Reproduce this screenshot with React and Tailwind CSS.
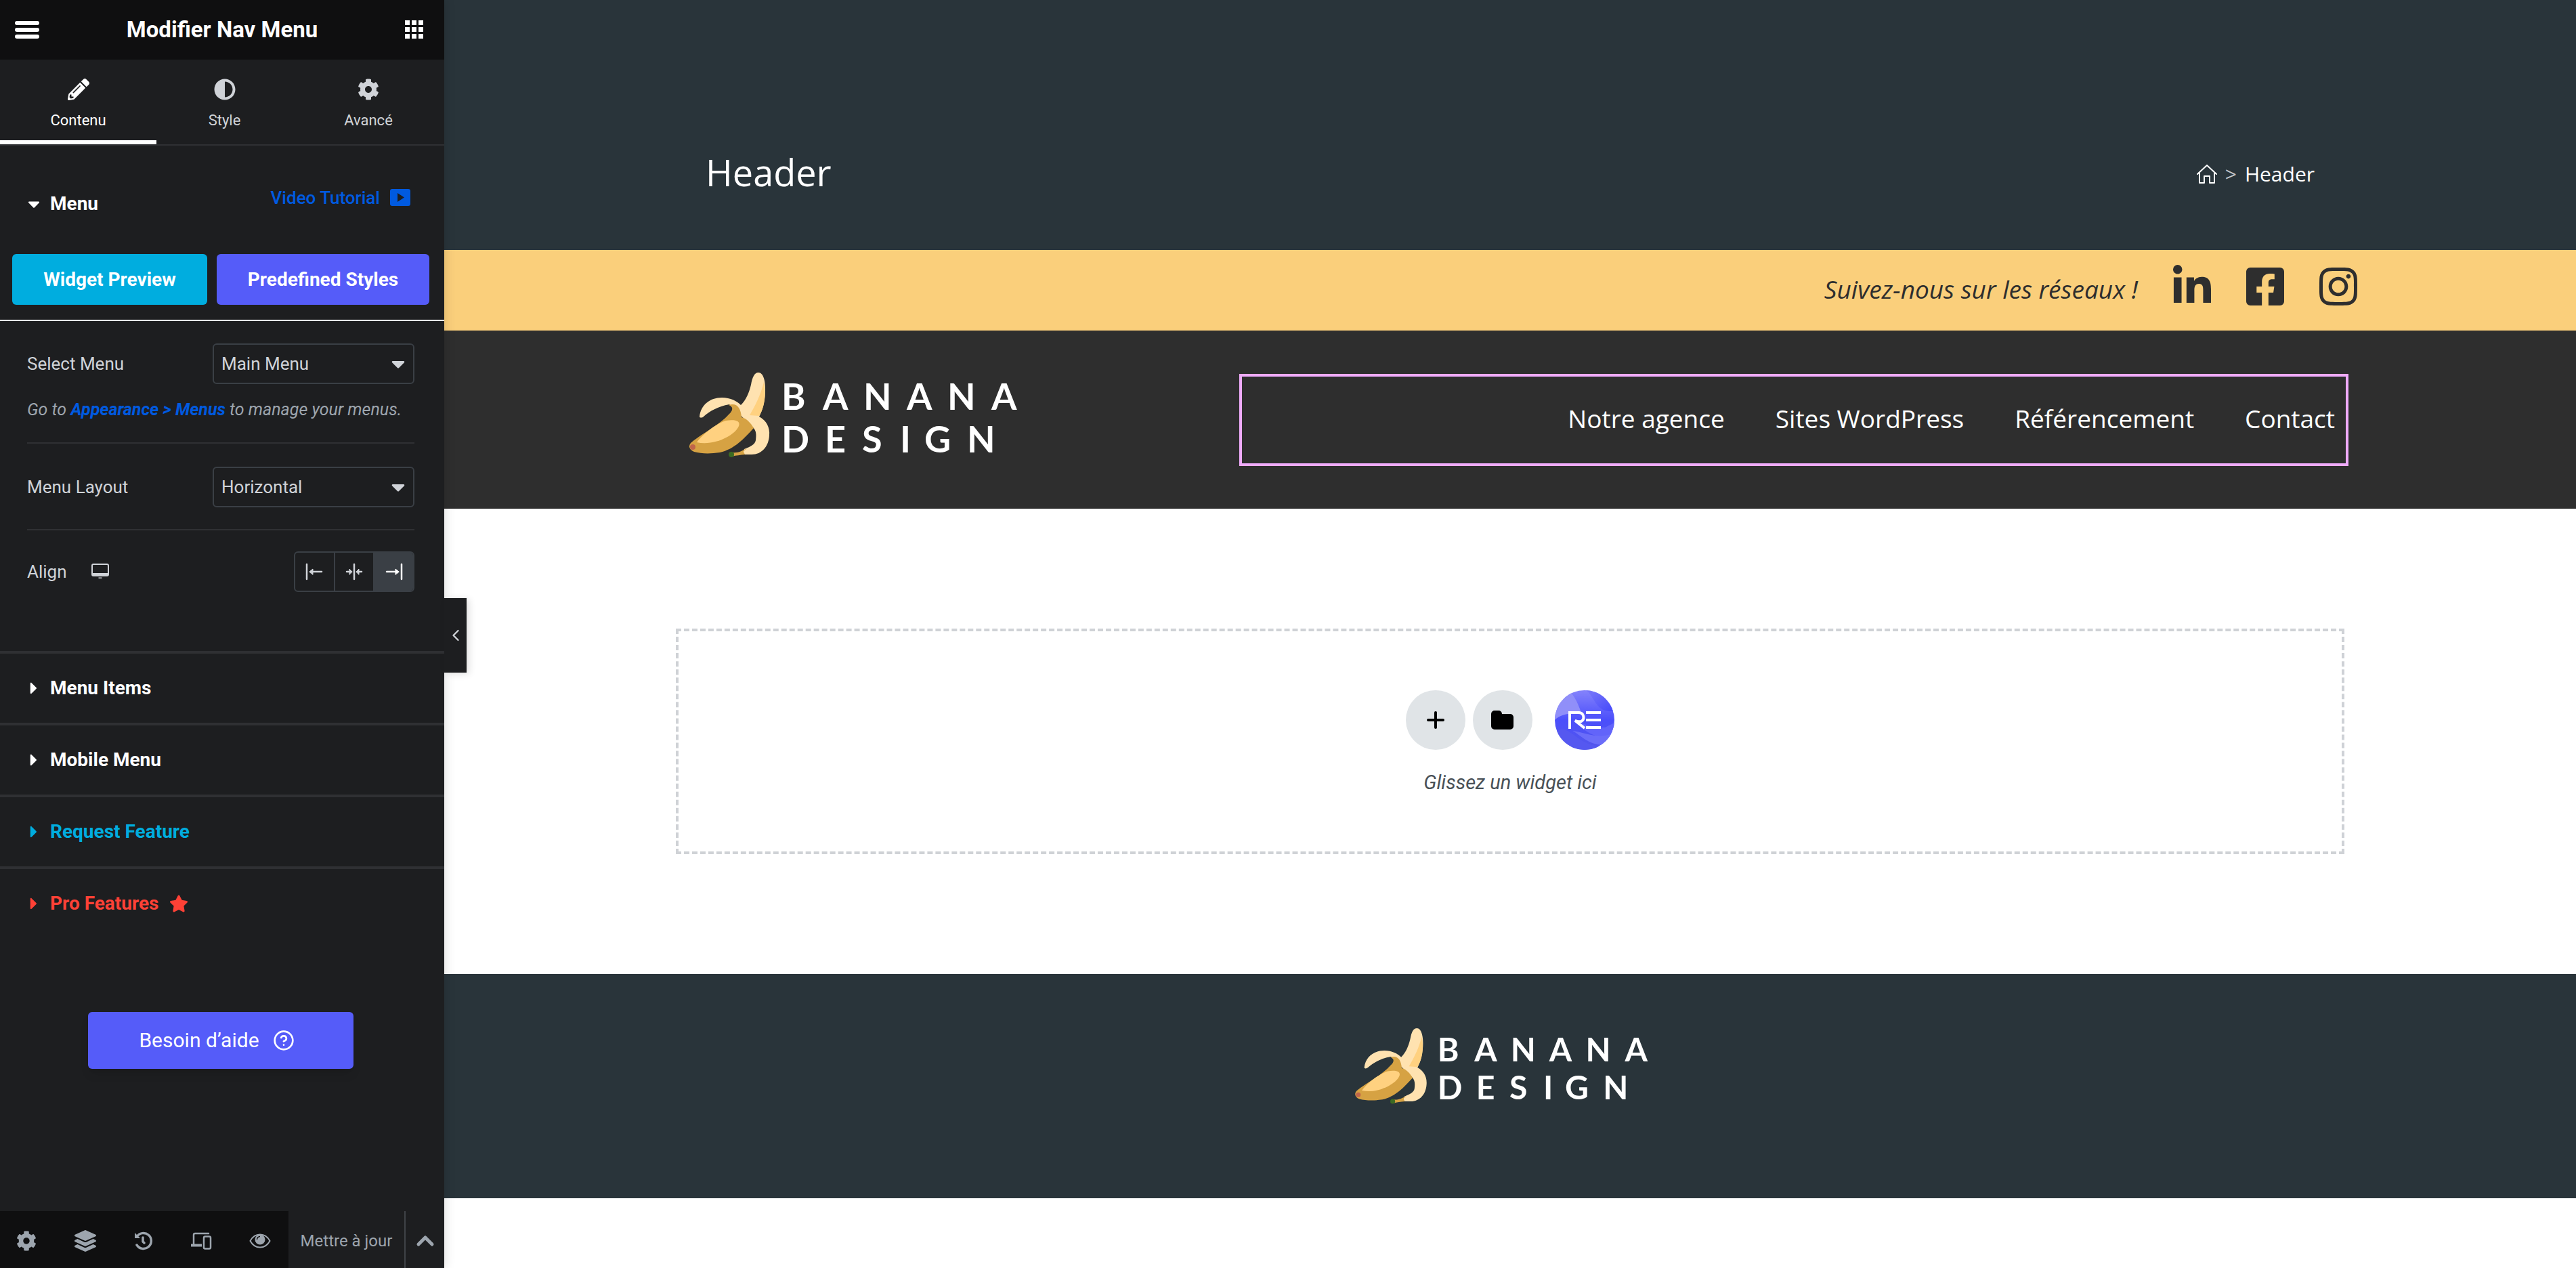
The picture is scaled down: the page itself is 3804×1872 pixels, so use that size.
import {
  FaCog,
  FaLayerGroup,
  FaCaretDown,
  FaCaretRight,
  FaLinkedinIn,
  FaFacebookSquare,
  FaInstagram,
  FaStar,
  FaPencilAlt,
  FaAdjust,
} from 'react-icons/fa';
import { ChevronLeft, ChevronUp, CircleHelp } from 'lucide-react';

const tabs = [
  { label: 'Contenu', Icon: FaPencilAlt, active: true },
  { label: 'Style', Icon: FaAdjust },
  { label: 'Avancé', Icon: FaCog },
];

const sections = [
  { label: 'Menu Items', color: 'text-white' },
  { label: 'Mobile Menu', color: 'text-white' },
  { label: 'Request Feature', color: 'text-[#00addf]' },
  { label: 'Pro Features', color: 'text-[#ff4136]', star: true },
];

const navLinks = ['Notre agence', 'Sites WordPress', 'Référencement', 'Contact'];

const BarsIcon = () => (
  <svg viewBox="0 0 36 26" className="h-[26px] w-9" fill="currentColor" aria-hidden="true">
    {[0, 10, 20].map((y) => <rect key={y} y={y} width="36" height="6" rx="3" />)}
  </svg>
);

const GridIcon = () => (
  <svg viewBox="0 0 28 28" className="size-7" fill="currentColor" aria-hidden="true">
    {[0, 10, 20].map((y) => [0, 10, 20].map((x) => <rect key={`${x}-${y}`} x={x} y={y} width="7" height="7" />))}
  </svg>
);

const VideoIcon = () => (
  <svg viewBox="0 0 30 26" className="h-[26px] w-[30px]" aria-hidden="true">
    <rect width="30" height="25" rx="3" fill="currentColor" />
    <path d="M11 6l10 6.500-10 6.500z" fill="#1d1e20" />
  </svg>
);

const DesktopIcon = () => (
  <svg viewBox="0 0 26 24" className="h-6 w-[26px]" aria-hidden="true">
    <path fillRule="evenodd" d="M3 0h20a3 3 0 0 1 3 3v13a3 3 0 0 1-3 3H3a3 3 0 0 1-3-3V3a3 3 0 0 1 3-3zm0 2a1 1 0 0 0-1 1v11h22V3a1 1 0 0 0-1-1z" fill="currentColor" />
    <path d="M10.500 20.500h5v1.500h-5z" fill="currentColor" />
  </svg>
);

const AlignStart = () => (
  <svg viewBox="0 0 26 26" className="size-[26px]" fill="none" stroke="currentColor" strokeWidth="2.500" strokeLinecap="round" aria-hidden="true">
    <path d="M2 2v22M8 13h16" />
    <path d="M6 13l5-4v8z" fill="currentColor" strokeWidth="1" />
  </svg>
);

const AlignCenter = () => (
  <svg viewBox="0 0 26 26" className="size-[26px]" fill="none" stroke="currentColor" strokeWidth="2.500" strokeLinecap="round" aria-hidden="true">
    <path d="M13 2v22M2 13h5M19 13h5" />
    <path d="M10 13l-4-4v8zM16 13l4-4v8z" fill="currentColor" strokeWidth="1" />
  </svg>
);

const AlignEnd = () => (
  <svg viewBox="0 0 26 26" className="size-[26px]" fill="none" stroke="currentColor" strokeWidth="2.500" strokeLinecap="round" aria-hidden="true">
    <path d="M24 2v22M2 13h16" />
    <path d="M20 13l-5-4v8z" fill="currentColor" strokeWidth="1" />
  </svg>
);

const HistoryIcon = () => (
  <svg viewBox="0 0 28 28" className="size-7" fill="none" stroke="currentColor" strokeWidth="3.500" strokeLinecap="round" aria-hidden="true">
    <path d="M5 8A11.500 11.500 0 1 1 5 20" />
    <path d="M2 2v8h8z" fill="currentColor" stroke="none" />
    <path d="M14 9v6l2 2" />
  </svg>
);

const ResponsiveIcon = () => (
  <svg viewBox="0 0 32 28" className="h-7 w-8" fill="none" stroke="currentColor" strokeWidth="2.500" aria-hidden="true">
    <path d="M5 20V5a2 2 0 0 1 2-2h20" strokeLinecap="round" />
    <path d="M1 20.500h16" strokeWidth="4" />
    <rect x="20" y="7.500" width="10" height="18" rx="2" />
  </svg>
);

const EyeIcon = () => (
  <svg viewBox="0 0 32 24" className="h-6 w-8" aria-hidden="true">
    <path d="M1.500 12C5 5.500 10 2.500 16 2.500S27 5.500 30.500 12C27 18.500 22 21.500 16 21.500S5 18.500 1.500 12z" fill="none" stroke="currentColor" strokeWidth="2" />
    <circle cx="16" cy="10" r="7.500" fill="currentColor" />
    <path d="M11.500 10a4.500 4.500 0 0 1 4.500-4.500" fill="none" stroke="#0f0f10" strokeWidth="1.500" />
  </svg>
);

const HomeIcon = () => (
  <svg viewBox="0 0 30 30" className="size-[30px]" fill="none" stroke="currentColor" strokeWidth="2" strokeLinejoin="round" strokeLinecap="round" aria-hidden="true">
    <path d="M1 15L15 2l14 13" />
    <path d="M4 13v15h7V18h8v10h7V13" />
  </svg>
);

const FolderIcon = () => (
  <svg viewBox="0 0 34 30" className="h-[30px] w-[34px]" aria-hidden="true">
    <path d="M5 1h6a5 5 0 0 1 5 5h12a5 5 0 0 1 5 5v13a5 5 0 0 1-5 5H5a5 5 0 0 1-5-5V6a5 5 0 0 1 5-5z" fill="#000" />
  </svg>
);

const RoyalBadge = () => (
  <svg viewBox="0 0 88 88" className="size-22" aria-hidden="true">
    <defs>
      <clipPath id="badge">
        <circle cx="44" cy="44" r="44" />
      </clipPath>
      <linearGradient id="badgeBase" x1="0" y1="0" x2="0" y2="1">
        <stop offset="0" stopColor="#8583fb" />
        <stop offset=".5" stopColor="#4b4ffb" />
        <stop offset="1" stopColor="#5356ea" />
      </linearGradient>
      <linearGradient id="badgeWave" x1="0" y1="0" x2="1" y2="1">
        <stop offset="0" stopColor="#7b7af9" />
        <stop offset="1" stopColor="#4448fa" />
      </linearGradient>
    </defs>
    <g clipPath="url(#badge)">
      <rect width="88" height="88" fill="url(#badgeBase)" />
      <path d="M0 0h20c10 8 16 24 20 36C26 33 10 34 0 44z" fill="#908ff9" />
      <path d="M46 0c12 8 14 30 34 31h8V0z" fill="url(#badgeWave)" />
      <path d="M30 46c14 4 30 10 44 9l14-7v24c-14 0-40-4-58-26z" fill="#6264fa" />
      <path d="M14 58c14 4 26 24 54 24L60 88H10L0 64c4-5 8-7 14-6z" fill="#5558f0" />
      <path d="M26 60c12 6 22 20 46 21l14-18C66 74 44 62 26 60z" fill="#6b6df9" />
    </g>
    <g fill="none" stroke="#fff" strokeWidth="4">
      <path d="M22 57V33h14a7 7 0 0 1 3 13c-3 1-5 0-9-1l14 11" />
      <path d="M46 33h22M46 44h22M46 55h22" />
    </g>
  </svg>
);

const Logo = ({ className }) => (
  <svg viewBox="0 0 490 140" className={className} role="img" aria-label="Banana Design">
    <path d="M15 65C17 48 30 37 48 37c13 0 22 5 28 11C84 40 88 30 91 18 93 7 96 0 102 0c7 0 11 12 10 30-1 14-4 26-9 35 11 6 16 16 15 28-1 16-11 28-26 28H78l3-8c10-4 16-7 17-13 1-8 1-14-4-19L59 47C42 50 30 57 21 65c-2 2-6 2-6 0z" fill="#ffe2b0" />
    <path d="M110 14c4 19 1 37-7 50l-14-1c9-16 16-29 21-49z" fill="#ffd180" />
    <path d="M58 48c12-4 18 4 19 18 8 2 14 9 18 16-14 15-28 31-50 36-14 2-27 2-38-1-7-3-9-8-5-13 12-11 42-26 56-42 7-6 7-12 0-14z" fill="#d6a243" />
    <path d="M11 103C20 90 42 74 54 71c13-2 22 0 19 8-5 13-36 30-62 24z" fill="#ffd180" />
    <path d="M85 112c-9 4-12 7-22 6v6c6-2 12-2 19-3l-2-4c0-2 3-3 5-5z" fill="#d6a243" />
    <circle cx="5" cy="110" r="4" fill="#c0654a" />
    <circle cx="62" cy="121" r="4" fill="#3c6b22" />
    <g fill="#fff" fontFamily="Lato, sans-serif" fontSize="54" fontWeight="700">
      <text x="136 197 257 321 381 446" y="55">BANANA</text>
      <text x="136 200 255 311 347 410" y="118">DESIGN</text>
    </g>
  </svg>
);

const Select = ({ id, label, value }) => (
  <div className="flex items-center justify-between">
    <label htmlFor={id}>{label}</label>
    <div className="relative w-[298px]">
      <select id={id} className="h-15 w-full appearance-none rounded-md border-2 border-[#3a3f45] bg-transparent pl-[11px] pr-10">
        <option>{value}</option>
      </select>
      <FaCaretDown className="pointer-events-none absolute top-[14px] right-2 size-8" />
    </div>
  </div>
);

const Sidebar = () => (
  <aside className="relative z-10 flex w-[656px] shrink-0 flex-col bg-[#1d1e20] font-['Roboto',sans-serif] text-[#d0d3d8] shadow-[0_0_16px_rgba(0,0,0,0.15)]">
    <header className="flex h-22 items-center justify-between bg-[#0f0f10] pl-[22px] pr-[30px] text-white">
      <button type="button" aria-label="Menu">
        <BarsIcon />
      </button>
      <h1 className="text-[33px] leading-10 font-bold">Modifier Nav Menu</h1>
      <button type="button" aria-label="Widgets">
        <GridIcon />
      </button>
    </header>

    <nav className="grid h-[127px] grid-cols-[231fr_201fr_224fr] border-b-2 border-[#2f3033] text-[22px] leading-7">
      {tabs.map(({ label, Icon, active }) => (
        <button
          key={label}
          type="button"
          className={active ? 'border-b-6 border-white pt-3 text-white' : 'pt-[6px]'}
        >
          <Icon className="mx-auto mb-4 size-8" />
          {label}
        </button>
      ))}
    </nav>

    <div className="flex h-40 items-center justify-between pr-[50px] pl-9">
      <button type="button" className="flex items-center gap-[10px] pt-3 text-[28px] leading-9 font-bold text-white">
        <FaCaretDown className="size-7" />
        Menu
      </button>
      <a href="#tutorial" className="flex items-center gap-[15px] pb-[6px] text-[26px] leading-9 font-medium text-[#005ae0]">
        Video Tutorial
        <VideoIcon />
      </a>
    </div>

    <div className="flex gap-[14px] border-b-2 border-[#e6e8ea] px-[18px] pb-[22px] text-[28px] leading-9 font-bold text-white">
      <button type="button" className="h-[75px] w-72 rounded-md bg-[#00addf]">Widget Preview</button>
      <button type="button" className="h-[75px] w-[314px] rounded-md bg-[#555cf9]">Predefined Styles</button>
    </div>

    <div className="pt-[33px] pr-11 pl-10 text-[26px] leading-9">
      <Select id="select-menu" label="Select Menu" value="Main Menu" />
      <p className="border-b-2 border-[#2f3033] pt-5 pb-[30px] text-[25px] leading-9 text-[#9da5ae] italic">
        Go to{' '}
        <a href="#menus" className="font-bold text-[#005ae0]">
          Appearance &gt; Menus
        </a>{' '}
        to manage your menus.
      </p>
      <div className="border-b-2 border-[#2f3033] pt-[34px] pb-8">
        <Select id="menu-layout" label="Menu Layout" value="Horizontal" />
      </div>
      <div className="flex items-center justify-between pt-[31px] pb-[87px]">
        <span className="flex items-center gap-9">
          Align
          <DesktopIcon />
        </span>
        <div className="flex h-15 w-[178px] divide-x-2 divide-[#3a3f45] overflow-hidden rounded-md border-2 border-[#3a3f45]">
          <button type="button" aria-label="Gauche" className="flex flex-1 items-center justify-center">
            <AlignStart />
          </button>
          <button type="button" aria-label="Centre" className="flex flex-1 items-center justify-center">
            <AlignCenter />
          </button>
          <button type="button" aria-label="Droite" className="flex flex-1 items-center justify-center bg-[#3a3f45] text-white">
            <AlignEnd />
          </button>
        </div>
      </div>
    </div>

    {sections.map(({ label, color, star }) => (
      <div key={label} className={`border-t-4 border-[#2f3033] ${color}`}>
        <button type="button" className="flex h-[102px] items-center gap-[10px] pl-9 text-[28px] leading-9 font-bold">
          <FaCaretRight className="size-7" />
          {label}
          {star && <FaStar className="ml-[6px] size-7" />}
        </button>
      </div>
    ))}

    <a
      href="#aide"
      className="mt-[109px] ml-[130px] flex h-[84px] w-[392px] items-center justify-center gap-5 rounded-md bg-[#555cf9] pr-3 text-3xl leading-9 text-white shadow-lg"
    >
      Besoin d’aide
      <CircleHelp className="size-8" strokeWidth={2} />
    </a>

    <footer className="mt-auto flex h-[84px] text-[#9da5ae]">
      <div className="flex w-[426px] items-center justify-between bg-[#0f0f10] pt-1 pr-[26px] pl-6">
        <button type="button" aria-label="Réglages"><FaCog className="size-[30px]" /></button>
        <button type="button" aria-label="Structure"><FaLayerGroup className="size-8" /></button>
        <button type="button" aria-label="Historique"><HistoryIcon /></button>
        <button type="button" aria-label="Mode responsive"><ResponsiveIcon /></button>
        <button type="button" aria-label="Aperçu"><EyeIcon /></button>
      </div>
      <button type="button" className="flex-1 border-r-2 border-[#3f4247] pt-1 text-2xl">Mettre à jour</button>
      <button type="button" aria-label="Options" className="flex w-[57px] items-center justify-center pt-1">
        <ChevronUp className="size-10" strokeWidth={3} />
      </button>
    </footer>

    <button
      type="button"
      aria-label="Masquer le panneau"
      className="absolute top-[883px] left-full flex h-[110px] w-[33px] items-center justify-center bg-[#1d1e20] shadow-[4px_2px_10px_rgba(0,0,0,0.12)]"
    >
      <ChevronLeft className="size-7" strokeWidth={2} />
    </button>
  </aside>
);

const Preview = () => (
  <main className="min-w-0 flex-1 bg-white font-['Open_Sans',sans-serif] text-white">
    <section className="bg-[#29343a] pt-[216px] pb-[73px]">
      <div className="mx-auto flex h-20 max-w-[2376px] items-center justify-between">
        <h2 className="pb-1 text-[54px] leading-[72px] font-medium">Header</h2>
        <div className="flex items-center gap-3 pt-[2px] text-3xl leading-10">
          <a href="#accueil" aria-label="Accueil"><HomeIcon /></a>
          <span className="text-[#c5c9cc]">&gt;</span>
          <span>Header</span>
        </div>
      </div>
    </section>

    <section className="bg-[#facf7b] text-[#2e2e2e]">
      <div className="mx-auto flex h-[119px] max-w-[2510px] items-center justify-end gap-12">
        <p className="pb-1 text-[37px] leading-12 italic">Suivez-nous sur les réseaux !</p>
        <div className="flex items-center gap-11 pb-3">
          <a href="#linkedin" aria-label="LinkedIn"><FaLinkedinIn className="size-16" /></a>
          <a href="#facebook" aria-label="Facebook"><FaFacebookSquare className="size-16" /></a>
          <a href="#instagram" aria-label="Instagram"><FaInstagram className="size-16" /></a>
        </div>
      </div>
    </section>

    <section className="bg-[#2e2e2e]">
      <div className="mx-auto flex h-[263px] max-w-[2476px] items-center justify-between pl-[26px]">
        <Logo className="h-35 w-[490px]" />
        <nav className="flex h-34 w-[1638px] items-center justify-end gap-[75px] border-4 border-[#f0abfc] pr-4 pb-1 text-[37px] leading-12">
          {navLinks.map((link) => (
            <a key={link} href="#page">{link}</a>
          ))}
        </nav>
      </div>
    </section>

    <section className="px-4 py-[177px]">
      <div className="mx-auto flex h-[333px] max-w-[2464px] flex-col items-center justify-center gap-7 border-4 border-dashed border-[#cfd2d6] pt-1 font-['Roboto',sans-serif]">
        <div className="flex gap-[11px]">
          <button type="button" aria-label="Ajouter" className="flex size-22 items-center justify-center rounded-full bg-[#e0e4e7]">
            <svg viewBox="0 0 26 26" className="size-[26px]" stroke="#000" strokeWidth="4" strokeLinecap="round" aria-hidden="true">
              <path d="M13 2v22M2 13h22" />
            </svg>
          </button>
          <button type="button" aria-label="Modèles" className="flex size-22 items-center justify-center rounded-full bg-[#e0e4e7]">
            <FolderIcon />
          </button>
          <button type="button" aria-label="Royal Elementor" className="ml-[22px]">
            <RoyalBadge />
          </button>
        </div>
        <p className="text-[29px] leading-10 text-[#495157] italic">Glissez un widget ici</p>
      </div>
    </section>

    <footer className="flex h-[331px] justify-center bg-[#29343a] pt-20 pr-5">
      <Logo className="h-[125px] w-[438px]" />
    </footer>
  </main>
);

export default function App() {
  return (
    <div className="flex min-h-screen bg-white">
      <Sidebar />
      <Preview />
    </div>
  );
}
